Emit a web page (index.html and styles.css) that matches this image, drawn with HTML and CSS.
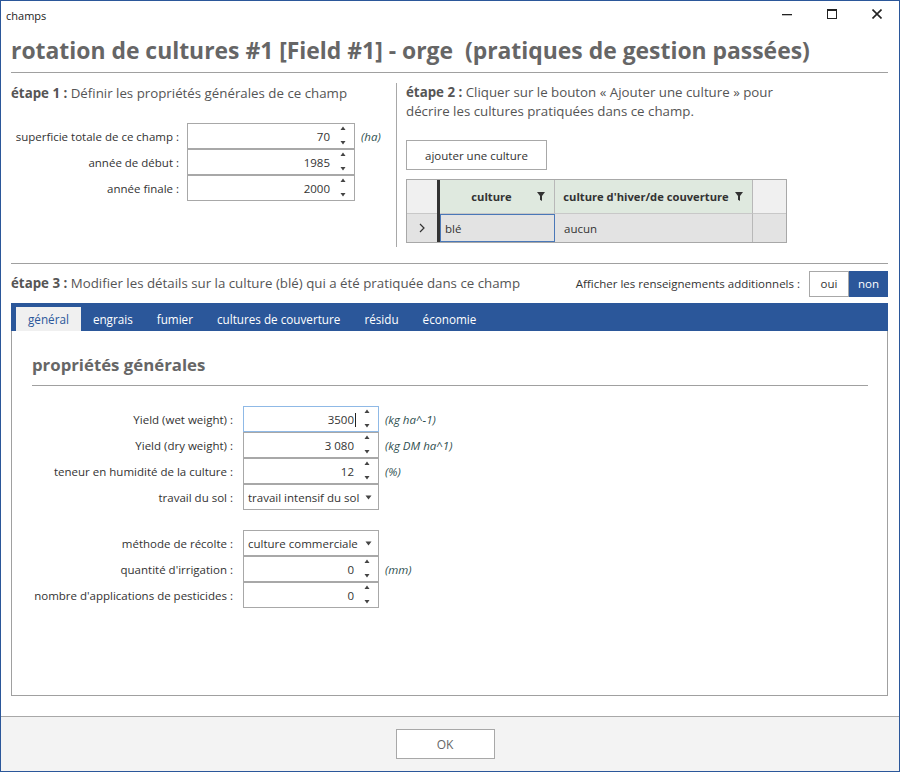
FILE: index.html
```html
<!DOCTYPE html>
<html lang="fr">
<head>
<meta charset="utf-8">
<title>champs</title>
<link rel="stylesheet" href="styles.css">
</head>
<body>
<div class="window">
  <div class="titlebar">
    <span class="wtitle">champs</span>
    <div class="wctrls">
      <span class="wbtn"><svg width="10" height="10" viewBox="0 0 10 10"><rect x="0" y="5" width="10" height="1.3" fill="#222"/></svg></span>
      <span class="wbtn"><svg width="10" height="10" viewBox="0 0 10 10"><rect x="0.5" y="0.5" width="9" height="9" fill="none" stroke="#222" stroke-width="1"/><rect x="0.5" y="0.5" width="9" height="1.5" fill="#222"/></svg></span>
      <span class="wbtn"><svg width="10" height="10" viewBox="0 0 10 10"><path d="M0.5 0.5 L9.5 9.5 M9.5 0.5 L0.5 9.5" stroke="#222" stroke-width="1.6"/></svg></span>
    </div>
  </div>
  <div class="main">
    <h1 class="title">rotation de cultures #1 [Field #1] - orge  (pratiques de gestion passées)</h1>
    <div class="steps">
      <section class="step1">
        <p class="step"><b>étape 1 :</b> Définir les propriétés générales de ce champ</p>
        <div class="form1">
          <div class="row1">
            <span class="lab1">superficie totale de ce champ :</span>
            <div class="num w1"><span class="val">70</span><svg class="spin" width="10" height="24" viewBox="0 0 10 24"><polygon points="2.5,6 7.5,6 5,2.5" fill="#444"/><polygon points="2.5,17 7.5,17 5,20.5" fill="#444"/></svg></div>
            <span class="unit">(ha)</span>
          </div>
          <div class="row1">
            <span class="lab1">année de début :</span>
            <div class="num w1"><span class="val">1985</span><svg class="spin" width="10" height="24" viewBox="0 0 10 24"><polygon points="2.5,6 7.5,6 5,2.5" fill="#444"/><polygon points="2.5,17 7.5,17 5,20.5" fill="#444"/></svg></div>
          </div>
          <div class="row1">
            <span class="lab1">année finale :</span>
            <div class="num w1"><span class="val">2000</span><svg class="spin" width="10" height="24" viewBox="0 0 10 24"><polygon points="2.5,6 7.5,6 5,2.5" fill="#444"/><polygon points="2.5,17 7.5,17 5,20.5" fill="#444"/></svg></div>
          </div>
        </div>
      </section>
      <section class="step2">
        <p class="step step2text"><b>étape 2 :</b> Cliquer sur le bouton « Ajouter une culture » pour décrire les cultures pratiquées dans ce champ.</p>
        <button class="btn addbtn">ajouter une culture</button>
        <div class="grid">
          <div class="gc corner"></div>
          <div class="gbar"></div>
          <div class="gc gh h1c"><span class="htext">culture</span><svg class="funnel" width="8" height="9" viewBox="0 0 8 9"><path d="M0 0 H8 L5 4 V9 L3 7.8 V4 Z" fill="#333"/></svg></div>
          <div class="gc gh h2c"><span class="htext">culture d'hiver/de couverture</span><svg class="funnel" width="8" height="9" viewBox="0 0 8 9"><path d="M0 0 H8 L5 4 V9 L3 7.8 V4 Z" fill="#333"/></svg></div>
          <div class="gc corner2"></div>
          <div class="gc rowhead"><svg width="6" height="10" viewBox="0 0 6 10"><path d="M1 1 L5 5 L1 9" fill="none" stroke="#333" stroke-width="1.2"/></svg></div>
          <div class="gc cell focus">blé</div>
          <div class="gc cell c2">aucun</div>
          <div class="gc cell c3"></div>
        </div>
      </section>
    </div>
    <div class="step3row">
      <p class="step"><b>étape 3 :</b> Modifier les détails sur la culture (blé) qui a été pratiquée dans ce champ</p>
      <div class="addl">
        <span class="addlabel">Afficher les renseignements additionnels :</span>
        <div class="toggle"><span class="tog">oui</span><span class="tog on">non</span></div>
      </div>
    </div>
    <nav class="tabs">
      <span class="tab active">général</span>
      <span class="tab">engrais</span>
      <span class="tab">fumier</span>
      <span class="tab">cultures de couverture</span>
      <span class="tab">résidu</span>
      <span class="tab">économie</span>
    </nav>
    <div class="panel">
      <h2 class="ptitle">propriétés générales</h2>
      <div class="pform">
        <div class="prow">
          <span class="plab">Yield (wet weight) :</span>
          <div class="num w2 focused"><span class="val">3500<span class="caret"></span></span><svg class="spin" width="10" height="24" viewBox="0 0 10 24"><polygon points="2.5,6 7.5,6 5,2.5" fill="#444"/><polygon points="2.5,17 7.5,17 5,20.5" fill="#444"/></svg></div>
          <span class="unit">(kg ha^-1)</span>
        </div>
        <div class="prow">
          <span class="plab">Yield (dry weight) :</span>
          <div class="num w2"><span class="val">3 080</span><svg class="spin" width="10" height="24" viewBox="0 0 10 24"><polygon points="2.5,6 7.5,6 5,2.5" fill="#444"/><polygon points="2.5,17 7.5,17 5,20.5" fill="#444"/></svg></div>
          <span class="unit">(kg DM ha^1)</span>
        </div>
        <div class="prow">
          <span class="plab">teneur en humidité de la culture :</span>
          <div class="num w2"><span class="val">12</span><svg class="spin" width="10" height="24" viewBox="0 0 10 24"><polygon points="2.5,6 7.5,6 5,2.5" fill="#444"/><polygon points="2.5,17 7.5,17 5,20.5" fill="#444"/></svg></div>
          <span class="unit">(%)</span>
        </div>
        <div class="prow">
          <span class="plab">travail du sol :</span>
          <div class="sel w2"><span class="stext">travail intensif du sol</span><svg class="sarrow" width="7" height="5" viewBox="0 0 7 5"><polygon points="0.5,0.5 6.5,0.5 3.5,4.5" fill="#444"/></svg></div>
        </div>
        <div class="prow gaptop">
          <span class="plab">méthode de récolte :</span>
          <div class="sel w2"><span class="stext">culture commerciale</span><svg class="sarrow" width="7" height="5" viewBox="0 0 7 5"><polygon points="0.5,0.5 6.5,0.5 3.5,4.5" fill="#444"/></svg></div>
        </div>
        <div class="prow">
          <span class="plab">quantité d'irrigation :</span>
          <div class="num w2"><span class="val">0</span><svg class="spin" width="10" height="24" viewBox="0 0 10 24"><polygon points="2.5,6 7.5,6 5,2.5" fill="#444"/><polygon points="2.5,17 7.5,17 5,20.5" fill="#444"/></svg></div>
          <span class="unit">(mm)</span>
        </div>
        <div class="prow">
          <span class="plab">nombre d'applications de pesticides :</span>
          <div class="num w2"><span class="val">0</span><svg class="spin" width="10" height="24" viewBox="0 0 10 24"><polygon points="2.5,6 7.5,6 5,2.5" fill="#444"/><polygon points="2.5,17 7.5,17 5,20.5" fill="#444"/></svg></div>
        </div>
      </div>
    </div>
  </div>
  <footer class="footer">
    <button class="btn okbtn">OK</button>
  </footer>
</div>
</body>
</html>
```

FILE: styles.css
```css
* { box-sizing: border-box; }
html, body { margin: 0; padding: 0; background: #fff; }
body { font-family: "Open Sans", "Noto Sans", "DejaVu Sans", sans-serif; font-size: 11.5px; color: #333; }

.window {
  width: 900px; height: 772px;
  border: 1px solid #2b579a;
  display: flex; flex-direction: column;
  background: #fff;
}

.titlebar { height: 32px; flex: none; display: flex; align-items: center; justify-content: space-between; }
.wtitle { padding-left: 5px; font-size: 11px; color: #222; margin-top: -3px; }
.wctrls { display: flex; height: 100%; }
.wbtn { width: 45px; height: 32px; display: flex; align-items: center; justify-content: center; margin-top: -3px; }

.main { flex: 1; display: flex; flex-direction: column; padding: 0 11px 0 10px; min-height: 0; }

.title {
  margin: 0; font-size: 22.9px; font-weight: 700; color: #666;
  line-height: 36px; padding-bottom: 3px; white-space: pre;
  border-bottom: 1px solid #a0a0a0;
}

.steps { display: flex; height: 191px; flex: none; border-bottom: 1px solid #a0a0a0; }
.step { margin: 0; font-size: 13.3px; line-height: 19px; color: #555; }
.step b { font-weight: 700; color: #555; }

.step1 { width: 385px; padding-top: 10px; }
.step1 .step { line-height: 20px; }
.form1 { margin-top: 20px; }
.row1 { display: flex; align-items: center; height: 26px; }
.lab1 { width: 168px; text-align: right; color: #333; }

.num, .sel {
  height: 26px; border: 1px solid #a8a8a8; background: #fff;
  display: flex; align-items: center;
}
.num { justify-content: flex-end; }
.w1 { width: 168px; margin-left: 8px; }
.val { margin-right: 8px; color: #333; position: relative; }
.spin { margin-right: 6px; flex: none; }
.unit { margin-left: 6px; font-style: italic; color: #2f4f4f; }

.step2 { flex: 1; border-left: 1px solid #a8a8a8; margin: 10px 0 16px; padding-left: 9px; }
.step2text { width: 380px; }

.btn {
  font-family: inherit; font-size: 11.5px; color: #333;
  background: #fff; border: 1px solid #a8a8a8; padding: 0; cursor: default;
}
.addbtn { display: block; width: 141px; height: 30px; margin-top: 19px; }

.grid {
  margin-top: 9px; width: 381px;
  display: grid; grid-template-columns: 30px 3px 115px 198px 33px;
  grid-template-rows: 34px 28px;
  border: 1px solid #a8a8a8;
}
.gc { display: flex; align-items: center; }
.corner { grid-column: 1; grid-row: 1; background: #f0f0f0; border-bottom: 1px solid #c8c8c8; }
.gbar { grid-column: 2; grid-row: 1 / span 2; background: #333; }
.gh { background: #dfe9df; border-bottom: 1px solid #c8c8c8; border-right: 1px solid #b8b8b8; font-weight: 700; font-size: 11.2px; color: #333; }
.h1c { grid-column: 3; grid-row: 1; }
.h2c { grid-column: 4; grid-row: 1; }
.htext { flex: 1; text-align: center; }
.funnel { margin-right: 9px; flex: none; }
.h1c .htext { padding-left: 6px; }
.h2c .htext { padding-left: 2px; }
.corner2 { grid-column: 5; grid-row: 1; background: #f0f0f0; border-bottom: 1px solid #c8c8c8; }
.rowhead { grid-column: 1; grid-row: 2; background: #e3e3e3; justify-content: center; padding-left: 0; }
.cell { grid-row: 2; background: #e3e3e3; color: #333; }
.focus { grid-column: 3; border: 1px solid #4a78b8; padding-left: 4px; }
.c2 { grid-column: 4; padding-left: 9px; border-right: 1px solid #b8b8b8; }
.c3 { grid-column: 5; }

.step3row { height: 39px; flex: none; display: flex; align-items: center; justify-content: space-between; }
.addl { display: flex; align-items: center; }
.addlabel { color: #333; margin-right: 9px; font-size: 11.5px; }
.toggle { display: flex; }
.tog { width: 40px; height: 26px; display: flex; align-items: center; justify-content: center; border: 1px solid #a8a8a8; color: #333; }
.tog.on { background: #2b579a; border-color: #2b579a; color: #fff; width: 39px; }

.tabs { height: 28px; flex: none; background: #2b579a; display: flex; align-items: flex-end; padding-left: 5px; }
.tab { height: 24px; line-height: 24px; padding: 0 12px; color: #fff; font-size: 11.7px; }
.tab.active { background: #f0f0f0; color: #2b579a; }

.panel { flex: 1; border: 1px solid #a0a0a0; border-top: none; margin-bottom: 20px; padding: 0 19px 0 20px; }
.ptitle {
  margin: 0; padding-top: 22px; padding-bottom: 8px; line-height: 24px;
  font-size: 16.8px; font-weight: 700; color: #666;
  border-bottom: 1px solid #a0a0a0;
}
.pform { margin-top: 20px; }
.prow { display: flex; align-items: center; height: 26px; }
.prow.gaptop { margin-top: 20px; }
.plab { width: 201px; text-align: right; color: #333; }
.w2 { width: 136px; margin-left: 10px; }
.focused { border-color: #8fb9e6; }
.caret { position: absolute; right: -2px; top: 1px; width: 1px; height: 14px; background: #222; }
.sel { justify-content: space-between; padding-left: 4px; }
.stext { color: #333; }
.sarrow { margin-right: 6px; }

.footer {
  height: 55px; flex: none; background: #f3f3f3; border-top: 1px solid #a8a8a8;
  display: flex; justify-content: center; padding-top: 12px; padding-right: 10px;
}
.okbtn { width: 99px; height: 30px; color: #666; font-size: 12px; }
```
